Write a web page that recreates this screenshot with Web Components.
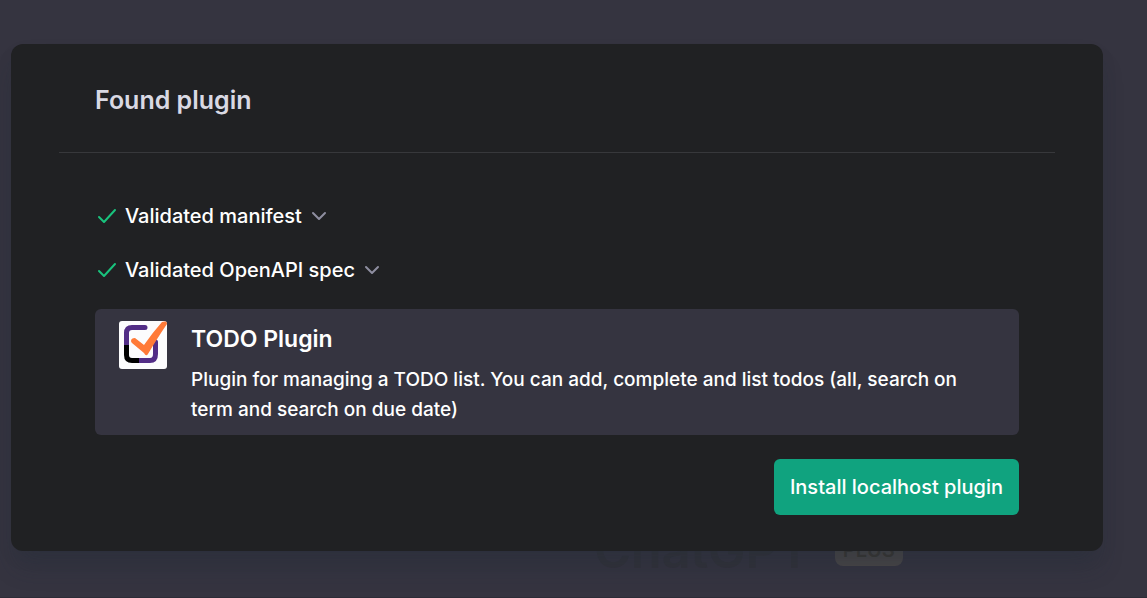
<!DOCTYPE html>
<html lang="en">
<head>
<meta charset="utf-8">
<title>Found plugin</title>
<style>
  body { margin: 0; background: #353440; font-family: Inter, "Liberation Sans", sans-serif; }
</style>
</head>
<body>
<app-stage>
  <chat-hero slot="behind"></chat-hero>
  <plugin-dialog heading="Found plugin">
    <check-row label="Validated manifest"></check-row>
    <check-row label="Validated OpenAPI spec"></check-row>
    <plugin-card name="TODO Plugin">Plugin for managing a TODO list. You can add, complete and list todos (all, search on term and search on due date)</plugin-card>
    <primary-button slot="actions">Install localhost plugin</primary-button>
  </plugin-dialog>
</app-stage>
<script>
const define = (name, render) => customElements.define(name, class extends HTMLElement {
  connectedCallback() {
    if (!this.shadowRoot) this.attachShadow({ mode: "open" }).innerHTML = render(this);
  }
});

define("app-stage", () => `
  <style>
    :host { display: grid; grid-template: minmax(0, 1fr) / minmax(0, 1fr); box-sizing: border-box;
      min-height: 100vh; border-bottom: 1px solid #2d2c37; }
    .behind, .front { grid-area: 1 / 1; }
    .behind { align-self: end; }
    .front { padding: 44px 44px 0 11px; z-index: 1; }
  </style>
  <div class="behind"><slot name="behind"></slot></div>
  <main class="front"><slot></slot></main>`);

define("chat-hero", () => `
  <style>
    :host { display: flex; align-items: center; justify-content: center; gap: 24px; padding: 0 0 15px 350px; }
    .name { font-size: 50px; line-height: 64px; font-weight: 600; color: #32323a; }
    .plan { font-size: 20px; line-height: 24px; font-weight: 600; color: #3a3733; background: #4a4748;
      padding: 4px 8px; border-radius: 8px; }
  </style>
  <span class="name">ChatGPT</span><span class="plan">PLUS</span>`);

define("plugin-dialog", el => `
  <style>
    :host { display: block; padding: 0 48px; background: #202123; border-radius: 12px;
      box-shadow: 0 20px 25px -5px rgba(32, 44, 56, .3), 0 8px 20px -6px rgba(32, 44, 56, .15); }
    header { padding: 36px 36px 32px; border-bottom: 1px solid #37383b; }
    h2 { margin: 0; font-size: 25px; line-height: 40px; font-weight: 600; color: #d9d9e3; }
    .body { display: flex; flex-direction: column; gap: 24px; padding: 48px 36px 36px; }
    .actions { display: flex; justify-content: flex-end; }
  </style>
  <header><h2>${el.getAttribute("heading")}</h2></header>
  <div class="body">
    <slot></slot>
    <div class="actions"><slot name="actions"></slot></div>
  </div>`);

define("check-row", el => `
  <style>
    :host { display: flex; }
    button { display: flex; align-items: center; gap: 6px; padding: 0; border: 0; background: none;
      font: 500 20px/30px Inter, "Liberation Sans", sans-serif; color: #fff; cursor: pointer; }
    svg { width: 24px; height: 24px; fill: none; stroke-width: 2; stroke-linecap: round; stroke-linejoin: round; }
    .check { stroke: #19c37d; }
    .chevron { stroke: #8e8ea0; }
  </style>
  <button type="button" aria-expanded="false">
    <svg class="check" viewBox="0 0 24 24" aria-hidden="true"><path d="M4 13l5 5L20 6"/></svg>
    <span>${el.getAttribute("label")}</span>
    <svg class="chevron" viewBox="0 0 24 24" aria-hidden="true"><path d="M5 9l6 6 6-6"/></svg>
  </button>`);

define("plugin-card", el => `
  <style>
    :host { display: flex; gap: 24px; padding: 12px 24px 10px; background: #353440; border-radius: 6px; }
    svg { flex: none; width: 48px; height: 48px; border-radius: 3px; }
    h3 { margin: 0 0 8px; font-size: 23px; line-height: 36px; font-weight: 600; color: #fff; }
    p { margin: 0; font-size: 19px; line-height: 30px; font-weight: 500; color: #fff; }
  </style>
  <svg viewBox="0 0 48 48" role="img" aria-label="Orange tick in a box">
    <rect width="48" height="48" fill="#fcfcfd"/>
    <g fill="none" stroke-width="5" stroke-linecap="round">
      <path d="M26 6.500H13Q7.500 6.500 7.500 12V26" stroke="#522d86"/>
      <path d="M36.500 21V33Q36.500 39.500 31 39.500H20" stroke="#522d86"/>
      <path d="M7.500 24V34Q7.500 39.500 13 39.500H20" stroke="#000" stroke-linecap="butt"/>
    </g>
    <path d="M12 20Q12 17 16 17L25 24Q34 11 43 1L48 0V3Q39 16 29 33Q27 36 25 32L13 22Q12 21 12 20Z" fill="#ff7a38"/>
  </svg>
  <div><h3>${el.getAttribute("name")}</h3><p><slot></slot></p></div>`);

define("primary-button", () => `
  <style>
    :host { display: block; }
    button { padding: 13px 16px; border: 0; border-radius: 6px; background: #10a37f; color: #fff;
      font: 500 20px/30px Inter, "Liberation Sans", sans-serif; cursor: pointer; }
  </style>
  <button type="button"><slot></slot></button>`);
</script>
</body>
</html>
